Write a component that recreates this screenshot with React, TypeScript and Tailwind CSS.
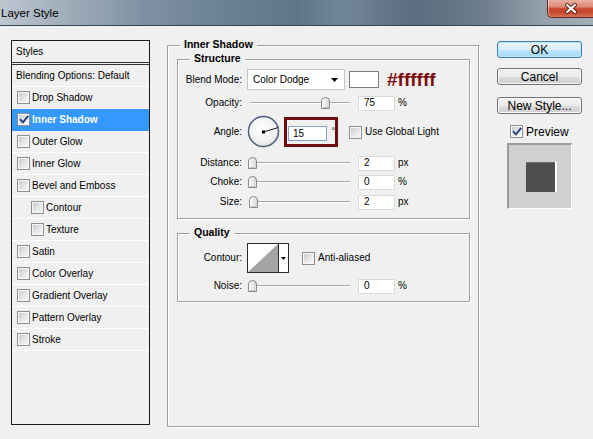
import React from "react";

type CheckProps = { checked?: boolean };

function CheckBox({ checked = false }: CheckProps) {
  return (
    <span className="relative flex h-[13px] w-[13px] shrink-0 items-center justify-center border border-[#8e8f8f] bg-[#f7f7f7]">
      <span className="h-[9px] w-[9px] bg-[linear-gradient(135deg,#c9cbcd_0%,#e6e7e8_55%,#f6f6f6_100%)]" />
      {checked && (
        <svg className="absolute left-[1px] top-[1px]" width="10" height="10" viewBox="0 0 10 10">
          <path d="M1.6 4.8 L4 7.4 L8.6 1.6" fill="none" stroke="#283f7c" strokeWidth="1.9" strokeLinecap="square" />
        </svg>
      )}
    </span>
  );
}

type StyleItem = { label: string; indent?: boolean; checked?: boolean; active?: boolean };

const styleItems: StyleItem[] = [
  { label: "Drop Shadow" },
  { label: "Inner Shadow", checked: true, active: true },
  { label: "Outer Glow" },
  { label: "Inner Glow" },
  { label: "Bevel and Emboss" },
  { label: "Contour", indent: true },
  { label: "Texture", indent: true },
  { label: "Satin" },
  { label: "Color Overlay" },
  { label: "Gradient Overlay" },
  { label: "Pattern Overlay" },
  { label: "Stroke" },
];

function TitleBar() {
  return (
    <div className="flex h-[26px] items-start justify-between border-b border-[#38434e] bg-[linear-gradient(90deg,#bcc6cf_0%,#a3b0bc_10%,#7f92a3_24%,#6b8094_38%,#617588_50%,#72869a_58%,#5a6c7e_70%,#6f7f8e_82%,#95a2ad_92%,#a3adb6_100%)]">
      <span className="ml-[1px] mt-[6px] text-[11.5px] leading-[14px] text-black">Layer Style</span>
      <div className="flex h-[18px] w-[46px] shrink-0 items-center justify-center rounded-bl-[5px] border-b border-l border-[#5e2a22] bg-[linear-gradient(180deg,#eab0a2_0%,#dc8670_40%,#c5452c_52%,#c64a30_75%,#d87258_100%)] shadow-[inset_1px_0_0_rgba(255,255,255,0.45)]">
        <svg width="14" height="11" viewBox="0 0 14 11">
          <path d="M3 2 L11 9 M11 2 L3 9" stroke="#5a1f16" strokeWidth="4" strokeLinecap="round" />
          <path d="M3 2 L11 9 M11 2 L3 9" stroke="#ffffff" strokeWidth="2.2" strokeLinecap="round" />
        </svg>
      </div>
    </div>
  );
}

function StylesPanel() {
  return (
    <div className="ml-[11px] mt-[14px] flex h-[385px] w-[139px] shrink-0 flex-col border border-[#1c1c1c]">
      <div className="flex h-[24px] items-center border-b-[3px] border-double border-[#333] pl-[4px]">
        Styles
      </div>
      <div className="flex h-[22px] items-center border-b border-white pl-[4px]">Blending Options: Default</div>
      {styleItems.map((item) => (
        <div
          key={item.label}
          className={
            item.active
              ? "flex h-[22px] items-center border-b border-[#3399ff] bg-[#3399ff] font-bold text-white"
              : "flex h-[22px] items-center border-b border-white"
          }
        >
          <span className={item.indent ? "ml-[19px] flex" : "ml-[5px] flex"}>
            <CheckBox checked={item.checked} />
          </span>
          <span className="ml-[2px]">{item.label}</span>
        </div>
      ))}
    </div>
  );
}

// position: 0..100 along the track
function Slider({ position }: { position: number }) {
  const left = Math.round(-2 + position * 0.973);
  return (
    <div className="relative ml-[8px] h-[16px] w-[100px] shrink-0">
      <div className="absolute left-0 right-0 top-[7px] h-[1px] bg-[#a9a9a9]" />
      <div className="absolute left-0 right-0 top-[8px] h-[1px] bg-white" />
      <svg className="absolute top-[2px]" style={{ left }} width="9" height="12" viewBox="0 0 9 12">
        <defs>
          <linearGradient id="thumbFill" x1="0" y1="0" x2="1" y2="0">
            <stop offset="0" stopColor="#ffffff" />
            <stop offset="1" stopColor="#d4d4d4" />
          </linearGradient>
        </defs>
        <path d="M0.5 11.5 V4 Q0.5 0.5 4.5 0.5 Q8.5 0.5 8.5 4 V11.5 Z" fill="url(#thumbFill)" stroke="#8a8a8a" />
        <path d="M2 10.5 H7" stroke="#c2c2c2" />
      </svg>
    </div>
  );
}

function NumBox({ value, className = "" }: { value: string; className?: string }) {
  return (
    <div className={`flex h-[15px] w-[37px] shrink-0 items-center border border-[#d9d9d9] bg-white pl-[5px] ${className}`}>
      {value}
    </div>
  );
}

type SliderRowProps = { label: string; value: number; max?: number; unit: string; className?: string };

function SliderRow({ label, value, max = 100, unit, className = "" }: SliderRowProps) {
  return (
    <div className={`flex h-[16px] items-center ${className}`}>
      <span className="w-[64px] text-right">{label}</span>
      <Slider position={(value / max) * 100} />
      <NumBox value={String(value)} className="ml-[8px]" />
      <span className="ml-[3px]">{unit}</span>
    </div>
  );
}

function AngleDial() {
  const a = (15 * Math.PI) / 180;
  const x2 = 16.5 + 15 * Math.cos(a);
  const y2 = 16.5 - 15 * Math.sin(a);
  return (
    <svg className="ml-[5px] shrink-0" width="34" height="34" viewBox="0 0 34 34">
      <defs>
        <radialGradient id="dialFill" cx="0.45" cy="0.4" r="0.6">
          <stop offset="0" stopColor="#ffffff" />
          <stop offset="0.7" stopColor="#f3f3f3" />
          <stop offset="1" stopColor="#dedfe3" />
        </radialGradient>
      </defs>
      <circle cx="16.5" cy="16.5" r="16" fill="none" stroke="#dfe6ef" strokeWidth="1" />
      <circle cx="16.5" cy="16.5" r="15" fill="url(#dialFill)" stroke="#4d5b7a" strokeWidth="1.4" />
      <line x1="16.5" y1="17" x2={x2} y2={y2} stroke="#111" strokeWidth="1" />
      <rect x="15" y="15.5" width="3" height="3" fill="#000" />
    </svg>
  );
}

function GroupTitle({ text }: { text: string }) {
  return (
    <span className="absolute left-[12px] top-[-8px] bg-[#f0f0f0] px-[4px] text-[10.5px] font-bold leading-[13px]">
      {text}
    </span>
  );
}

const etched = "border border-[#a0a0a0] shadow-[inset_1px_1px_0_#fff,1px_1px_0_#fff]";

function ContourPicker() {
  return (
    <div className="ml-[5px] flex h-[30px] w-[42px] shrink-0 border border-[#2a2a2a] bg-white">
      <svg width="30" height="28" viewBox="0 0 30 28">
        <polygon points="0,28 30,0 30,28" fill="#a4a4a4" />
      </svg>
      <div className="flex w-[10px] items-center justify-center border-l border-[#2a2a2a]">
        <svg width="5" height="3" viewBox="0 0 5 3">
          <path d="M0 0 H5 L2.5 3 Z" fill="#000" />
        </svg>
      </div>
    </div>
  );
}

function InnerShadowGroup() {
  return (
    <div className={`relative ml-[17px] mt-[19px] h-[382px] w-[312px] shrink-0 ${etched}`}>
      <GroupTitle text="Inner Shadow" />

      {/* Structure */}
      <div className={`relative ml-[9px] mt-[13px] h-[160px] w-[293px] pt-[9px] ${etched}`}>
        <GroupTitle text="Structure" />

        <div className="flex h-[21px] items-center">
          <span className="w-[64px] text-right">Blend Mode:</span>
          <div className="ml-[5px] flex h-[21px] w-[98px] items-center justify-between border border-[#c6c6c6] bg-white pl-[5px] pr-[6px]">
            <span>Color Dodge</span>
            <svg width="7" height="4" viewBox="0 0 7 4">
              <path d="M0 0 H7 L3.5 4 Z" fill="#000" />
            </svg>
          </div>
          <div className="ml-[4px] h-[17px] w-[30px] border border-[#7d7d7d] bg-white" />
          <span className="ml-[8px] text-[19px] font-bold leading-none text-[#7d0b0b]">#ffffff</span>
        </div>

        <SliderRow label="Opacity:" value={75} unit="%" className="mt-[5px]" />

        <div className="mt-[5px] flex h-[32px] items-center">
          <span className="w-[64px] text-right">Angle:</span>
          <AngleDial />
          <div className="ml-[3px] flex h-[30px] w-[54px] items-start border-[3px] border-[#6a0e12] pl-[1px] pt-[6px]">
            <div className="flex h-[15px] w-[40px] items-center border border-[#7ea3cc] bg-white pl-[4px]">15</div>
            <span className="ml-[4px] mt-[1px] text-[9px] leading-none">°</span>
          </div>
          <span className="ml-[11px] flex">
            <CheckBox />
          </span>
          <span className="ml-[3px]">Use Global Light</span>
        </div>

        <SliderRow label="Distance:" value={2} max={30000} unit="px" className="mt-[7px]" />
        <SliderRow label="Choke:" value={0} unit="%" className="mt-[3px]" />
        <SliderRow label="Size:" value={2} max={250} unit="px" className="mt-[4px]" />
      </div>

      {/* Quality */}
      <div className={`relative ml-[9px] mt-[14px] h-[69px] w-[293px] pt-[9px] ${etched}`}>
        <GroupTitle text="Quality" />
        <div className="flex h-[30px] items-center">
          <span className="w-[64px] text-right">Contour:</span>
          <ContourPicker />
          <span className="ml-[13px] flex">
            <CheckBox />
          </span>
          <span className="ml-[3px]">Anti-aliased</span>
        </div>
        <SliderRow label="Noise:" value={0} unit="%" className="mt-[5px]" />
      </div>
    </div>
  );
}

function DialogButton({ label, primary = false, className = "" }: { label: string; primary?: boolean; className?: string }) {
  const look = primary
    ? "border-[#3c7fb1] bg-[linear-gradient(180deg,#eaf6fd_0%,#d9f0fc_50%,#bee6fd_50%,#a7d9f5_100%)] shadow-[inset_0_0_0_1px_#bde8fd]"
    : "border-[#707070] bg-[linear-gradient(180deg,#f2f2f2_0%,#ebebeb_50%,#dddddd_50%,#cfcfcf_100%)] shadow-[inset_0_0_0_1px_#fcfcfc]";
  return (
    <div className={`flex h-[17px] w-[85px] items-center justify-center rounded-[3px] border text-[12px] ${look} ${className}`}>
      {label}
    </div>
  );
}

function ButtonsColumn() {
  return (
    <div className="ml-[18px] mt-[15px] flex w-[85px] shrink-0 flex-col">
      <DialogButton label="OK" primary />
      <DialogButton label="Cancel" className="mt-[10px]" />
      <DialogButton label="New Style..." className="mt-[12px]" />
      <div className="ml-[13px] mt-[11px] flex items-center">
        <CheckBox checked />
        <span className="ml-[3px] text-[12px]">Preview</span>
      </div>
      <div className="ml-[10px] mt-[5px] flex h-[66px] w-[65px] items-center justify-center border-b border-l-2 border-r border-t-2 border-b-white border-l-[#9c9c9c] border-r-white border-t-[#9c9c9c] bg-[#d0d0d0]">
        <div className="h-[30px] w-[29px] bg-[#4e4e4e] shadow-[inset_0_1px_0_#6c6c6c,2px_0_0_#ffffff]" />
      </div>
    </div>
  );
}

export default function App() {
  return (
    <div className="h-[439px] w-[593px] overflow-hidden bg-[#f0f0f0] font-['Liberation_Sans',Arial,sans-serif] text-[10px] leading-none text-black">
      <TitleBar />
      <div className="flex">
        <StylesPanel />
        <InnerShadowGroup />
        <ButtonsColumn />
      </div>
    </div>
  );
}
